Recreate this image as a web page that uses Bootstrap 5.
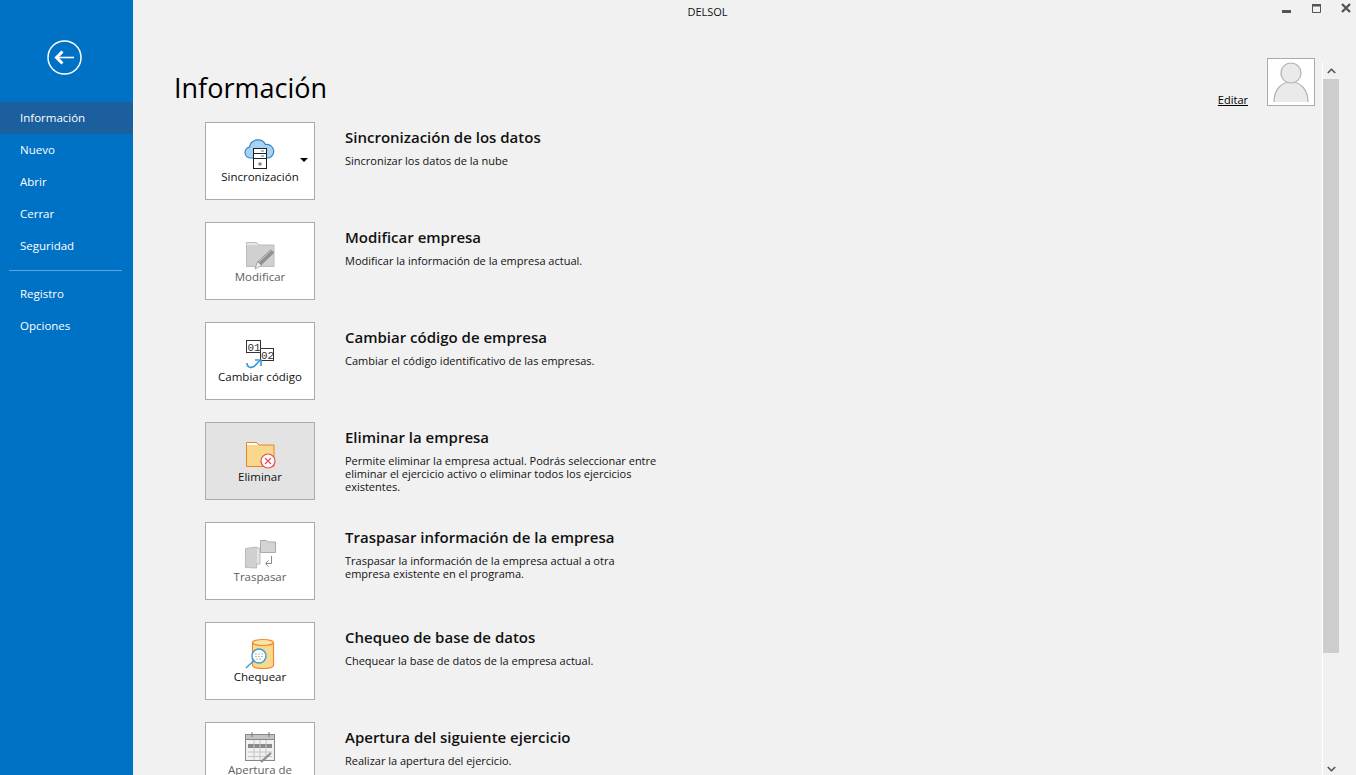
<!DOCTYPE html>
<html lang="es">

<head>
    <meta charset="UTF-8">
    <meta name="viewport" content="width=device-width, initial-scale=1.0">
    <title>DELSOL - Información</title>
    <link href="https://cdn.jsdelivr.net/npm/bootstrap@5.3.2/dist/css/bootstrap.min.css" rel="stylesheet">
    <style>
        html, body { height: 100%; overflow: hidden; }
        body { background: #f1f1f1; color: #111; font-family: "Open Sans", "Noto Sans", sans-serif; font-size: 11px; }

        .side-bar { width: 133px; background: #0072c6; padding-top: 40px; }
        .back-arrow { height: 62px; padding-left: 47px; }
        .side-link { height: 32px; padding: 0 0 0 20px; display: flex; align-items: center; color: #fff; font-size: 11.5px; }
        .side-link:hover, .side-link:focus { color: #fff; }
        .side-link.current { background: #1b5f9f; }
        .side-rule { margin: 8px 11px 7px 9px; border-top: 1px solid #5ba3da; opacity: 1; }

        .title-bar { height: 24px; }
        .app-name { font-size: 11px; line-height: 24px; }
        .win-buttons { width: 74px; }

        .page-scroll { min-height: 0; }
        .page-body { padding: 0 7px 0 41px; }
        .page-head { height: 98px; }
        .page-title { font-size: 27px; font-weight: 400; line-height: 40px; margin: 44px 0 0; color: #000; }
        .avatar-area { margin-top: 34px; height: 48px; gap: 19px; }
        .edit-link { color: #000; font-size: 11px; line-height: 13px; }
        .avatar-box { width: 48px; height: 48px; background: #fff; border: 1px solid #ababab; }

        .option-row { height: 100px; padding-left: 31px; }
        .option-btn { width: 110px; height: 78px; padding: 0; background: #fff; border: 1px solid #ababab; border-radius: 0; color: #111; font-size: 11.5px; line-height: 14px; }
        .option-btn.is-off { color: #5f5f5f; }
        .option-btn.is-hot { background: #e3e3e3; }
        .option-btn svg { display: block; }
        .drop-caret { position: absolute; right: 6px; top: 35px; border: 4px solid transparent; border-top-color: #000; border-bottom-width: 0; }
        .option-text { margin-left: 30px; width: 314px; padding-top: 5px; }
        .option-head { font-size: 15px; font-weight: 600; line-height: 20px; margin: 0 0 7px; }
        .option-desc { font-size: 11px; line-height: 13px; margin: 0; }

        .scroll-rail { width: 17px; margin: 38px 17px 0 0; background: #f1f1f1; border-left: 1px solid #fff; }
        .scroll-end { height: 17px; }
        .scroll-thumb { height: 574px; background: #cdcdcd; }
        .scroll-low { margin-top: 113px; }
    </style>
</head>

<body>
    <div class="d-flex h-100">
        <!-- Sidebar -->
        <nav class="side-bar flex-shrink-0">
            <div class="back-arrow">
                <svg width="35" height="35" viewBox="0 0 35 35" fill="none" stroke="#fff">
                    <circle cx="17.500" cy="17.500" r="16.500" stroke-width="1.500" />
                    <path d="M27 17.500H10" stroke-width="1.600" />
                    <path d="M15.500 11.500 9.500 17.500l6 6" stroke-width="3" />
                </svg>
            </div>
            <div class="nav flex-column">
                <a class="nav-link side-link current" href="#">Información</a>
                <a class="nav-link side-link" href="#">Nuevo</a>
                <a class="nav-link side-link" href="#">Abrir</a>
                <a class="nav-link side-link" href="#">Cerrar</a>
                <a class="nav-link side-link" href="#">Seguridad</a>
                <hr class="side-rule">
                <a class="nav-link side-link" href="#">Registro</a>
                <a class="nav-link side-link" href="#">Opciones</a>
            </div>
        </nav>

        <div class="flex-grow-1 d-flex flex-column">
            <!-- Title bar -->
            <div class="title-bar d-flex flex-shrink-0">
                <div class="app-name flex-grow-1 text-center">DELSOL</div>
                <div class="win-buttons position-relative">
                    <svg class="position-absolute top-0 start-0" width="74" height="20" viewBox="0 0 74 20">
                        <rect x="0" y="10" width="9" height="3" fill="#555" />
                        <path d="M30.500 4.500h8v8h-8z" fill="none" stroke="#555" />
                        <rect x="30" y="4" width="9" height="2.500" fill="#555" />
                        <path d="M60 4l8 8M68 4l-8 8" stroke="#555" stroke-width="2.400" fill="none" />
                    </svg>
                </div>
            </div>

            <div class="page-scroll flex-grow-1 d-flex overflow-hidden">
                <main class="page-body flex-grow-1">
                    <div class="page-head d-flex justify-content-between">
                        <h1 class="page-title">Información</h1>
                        <div class="avatar-area d-flex align-items-end">
                            <a class="edit-link" href="#">Editar</a>
                            <div class="avatar-box">
                                <svg width="46" height="46" viewBox="0 0 46 46">
                                    <path d="M6 43c0-12 7-20 17-20s17 8 17 20z" fill="#eaeaea" />
                                    <path d="M6 43c0-12 7-20 17-20s17 8 17 20" fill="none" stroke="#b4b4b4" stroke-width="1.200" />
                                    <circle cx="23" cy="14" r="10" fill="#eaeaea" stroke="#b4b4b4" stroke-width="1.200" />
                                </svg>
                            </div>
                        </div>
                    </div>

                    <div class="option-row d-flex">
                        <button class="btn option-btn position-relative d-flex flex-column align-items-center justify-content-center flex-shrink-0">
                            <svg width="32" height="32" viewBox="0 0 32 32">
                                <path d="M6.500 20a5.500 5.500 0 0 1-1-10.900A8.500 8.500 0 0 1 21.500 6.500 7 7 0 0 1 25 20z" fill="#a9d1f2" stroke="#2f86c9" stroke-width="1.200" />
                                <rect x="9.500" y="10.500" width="13" height="20" fill="#fff" stroke="#222" />
                                <path d="M9.500 15.500h13M9.500 20.500h13" stroke="#222" />
                                <path d="M17 13h3M17 18h3" stroke="#2f86c9" />
                                <circle cx="16" cy="26" r="1.800" fill="#888" />
                            </svg>
                            <span>Sincronización</span>
                            <span class="drop-caret"></span>
                        </button>
                        <div class="option-text">
                            <h2 class="option-head">Sincronización de los datos</h2>
                            <p class="option-desc">Sincronizar los datos de la nube</p>
                        </div>
                    </div>

                    <div class="option-row d-flex">
                        <button class="btn option-btn is-off d-flex flex-column align-items-center justify-content-center flex-shrink-0">
                            <svg width="32" height="32" viewBox="0 0 32 32">
                                <path d="M2.500 28.500V4.500h10l2.500 2.500h15v21.500z" fill="#d0d0d0" stroke="#bdbdbd" />
                                <path d="M3 5h9l2 2H3z" fill="#e6e6e6" />
                                <path d="M15.500 25.500 28.500 13" stroke="#909090" stroke-width="5" />
                                <path d="M15 24 27.500 12" stroke="#c8c8c8" stroke-width="1" />
                                <path d="M13.500 23.500l4 4L11 31z" fill="#efefef" stroke="#8a8a8a" stroke-width=".7" />
                            </svg>
                            <span>Modificar</span>
                        </button>
                        <div class="option-text">
                            <h2 class="option-head">Modificar empresa</h2>
                            <p class="option-desc">Modificar la información de la empresa actual.</p>
                        </div>
                    </div>

                    <div class="option-row d-flex">
                        <button class="btn option-btn d-flex flex-column align-items-center justify-content-center flex-shrink-0">
                            <svg width="32" height="32" viewBox="0 0 32 32">
                                <rect x="2.500" y="2.500" width="14" height="12" fill="#fff" stroke="#333" />
                                <rect x="16.500" y="10.500" width="13" height="12" fill="#fff" stroke="#333" />
                                <text x="3.500" y="12.500" font-size="11" font-family="Liberation Mono, monospace" fill="#333">01</text>
                                <text x="17" y="20.500" font-size="11" font-family="Liberation Mono, monospace" fill="#333">02</text>
                                <path d="M3 25c0 5 4 5 7 3.500l6-6" fill="none" stroke="#3b9ad9" stroke-width="1.600" />
                                <path d="M11 22h6v6" fill="none" stroke="#3b9ad9" stroke-width="1.600" />
                            </svg>
                            <span>Cambiar código</span>
                        </button>
                        <div class="option-text">
                            <h2 class="option-head">Cambiar código de empresa</h2>
                            <p class="option-desc">Cambiar el código identificativo de las empresas.</p>
                        </div>
                    </div>

                    <div class="option-row d-flex">
                        <button class="btn option-btn is-hot d-flex flex-column align-items-center justify-content-center flex-shrink-0">
                            <svg width="32" height="32" viewBox="0 0 32 32">
                                <path d="M2.500 28.500V4.500h10l2.500 2.500h15v21.500z" fill="#f7d88c" stroke="#e8842c" />
                                <path d="M3 5h9l2 2H3z" fill="#fff" />
                                <circle cx="24" cy="23" r="7" fill="#fff" stroke="#e9484c" stroke-width="1.200" />
                                <path d="M21 20l6 6M27 20l-6 6" stroke="#e9484c" stroke-width="1.200" />
                            </svg>
                            <span>Eliminar</span>
                        </button>
                        <div class="option-text">
                            <h2 class="option-head">Eliminar la empresa</h2>
                            <p class="option-desc">Permite eliminar la empresa actual. Podrás seleccionar entre eliminar el ejercicio activo o eliminar todos los ejercicios existentes.</p>
                        </div>
                    </div>

                    <div class="option-row d-flex">
                        <button class="btn option-btn is-off d-flex flex-column align-items-center justify-content-center flex-shrink-0">
                            <svg width="32" height="32" viewBox="0 0 32 32">
                                <path d="M1.500 10.500l11-1.500v21l-11-.500z" fill="#d0d0d0" stroke="#bbb" />
                                <path d="M12.500 10h3.500v16h-3.500" fill="#e4e4e4" stroke="#bbb" />
                                <path d="M16.500 14.500V2.500h6l1.500 1.500h7.500v10.500z" fill="#d4d4d4" stroke="#aaa" />
                                <path d="M27.500 18v7.500H22M24.500 22.500l-3 3 3 3" fill="none" stroke="#888" />
                            </svg>
                            <span>Traspasar</span>
                        </button>
                        <div class="option-text">
                            <h2 class="option-head">Traspasar información de la empresa</h2>
                            <p class="option-desc">Traspasar la información de la empresa actual a otra empresa existente en el programa.</p>
                        </div>
                    </div>

                    <div class="option-row d-flex">
                        <button class="btn option-btn d-flex flex-column align-items-center justify-content-center flex-shrink-0">
                            <svg width="32" height="32" viewBox="0 0 32 32">
                                <path d="M8.500 4.500v23c0 1.500 4.500 3 10.500 3s10.500-1.500 10.500-3v-23z" fill="#f9d98e" stroke="#ec8a2e" stroke-width="1.200" />
                                <ellipse cx="19" cy="4.500" rx="10.500" ry="3" fill="#fbe3a8" stroke="#ec8a2e" stroke-width="1.200" />
                                <circle cx="15" cy="18" r="7" fill="#fff" stroke="#3a9ad9" stroke-width="1.400" />
                                <path d="M11 16h8M11 18.500h8M12 21h6" stroke="#bbb" stroke-dasharray="2 1" />
                                <path d="M2 30l8-7.500" stroke="#3a9ad9" stroke-width="1.400" />
                            </svg>
                            <span>Chequear</span>
                        </button>
                        <div class="option-text">
                            <h2 class="option-head">Chequeo de base de datos</h2>
                            <p class="option-desc">Chequear la base de datos de la empresa actual.</p>
                        </div>
                    </div>

                    <div class="option-row d-flex">
                        <button class="btn option-btn is-off d-flex flex-column align-items-center justify-content-center flex-shrink-0">
                            <svg width="32" height="32" viewBox="0 0 32 32">
                                <rect x="1.500" y="3.500" width="29" height="26" fill="#f1f1f1" stroke="#888" />
                                <rect x="1.500" y="3.500" width="29" height="5" fill="#c4c4c4" stroke="#888" />
                                <path d="M8 1v5M25 1v5" stroke="#777" />
                                <rect x="4" y="13" width="24" height="4" fill="#8a8a8a" />
                                <path d="M4 21h24M4 25.500h24M10 9v20M16 9v20M22 9v20" stroke="#c4c4c4" />
                                <path d="M17 31l10-9" stroke="#8a8a8a" stroke-width="2" />
                            </svg>
                            <span>Apertura de<br>ejercicio</span>
                        </button>
                        <div class="option-text">
                            <h2 class="option-head">Apertura del siguiente ejercicio</h2>
                            <p class="option-desc">Realizar la apertura del ejercicio.</p>
                        </div>
                    </div>
                </main>

                <!-- Scrollbar -->
                <div class="scroll-rail flex-shrink-0">
                    <div class="scroll-end d-flex align-items-center justify-content-center">
                        <svg width="9" height="6" viewBox="0 0 9 6"><path d="M.8 5l3.700-3.700L8.200 5" fill="none" stroke="#505050" stroke-width="1.600" /></svg>
                    </div>
                    <div class="scroll-thumb"></div>
                    <div class="scroll-low d-flex justify-content-center">
                        <svg width="9" height="6" viewBox="0 0 9 6"><path d="M.8 1l3.700 3.700L8.200 1" fill="none" stroke="#505050" stroke-width="1.600" /></svg>
                    </div>
                </div>
            </div>
        </div>
    </div>

    <script src="https://cdn.jsdelivr.net/npm/bootstrap@5.3.2/dist/js/bootstrap.bundle.min.js"></script>
</body>

</html>
